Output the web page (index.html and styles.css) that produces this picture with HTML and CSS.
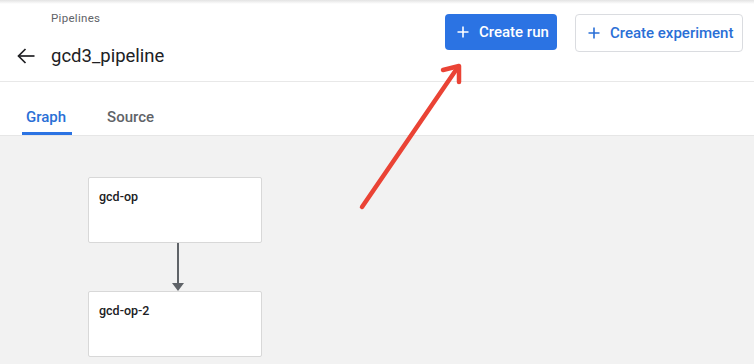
FILE: index.html
```html
<!DOCTYPE html>
<html>
<head>
<meta charset="utf-8">
<link rel="stylesheet" href="styles.css">
</head>
<body>
<div class="page">
  <div class="topshadow"></div>
  <header class="header">
    <div class="titles">
      <div class="crumb">Pipelines</div>
      <div class="title-row">
        <svg class="back" width="18" height="16" viewBox="0 0 18 16"><g stroke="#202124" stroke-width="1.7" fill="none" stroke-linecap="butt"><path d="M1.5 8H17.5"/><path d="M8.5 1L1.5 8L8.5 15"/></g></svg>
        <h1 class="title">gcd3_pipeline</h1>
      </div>
    </div>
    <div class="actions">
      <button class="btn btn-primary"><svg class="plus" width="12" height="12" viewBox="0 0 12 12"><path d="M6 0.5v11M0.5 6h11" stroke="currentColor" stroke-width="1.6"/></svg><span>Create run</span></button>
      <button class="btn btn-outline"><svg class="plus" width="12" height="12" viewBox="0 0 12 12"><path d="M6 0.5v11M0.5 6h11" stroke="currentColor" stroke-width="1.6"/></svg><span>Create experiment</span></button>
    </div>
  </header>
  <nav class="tabs">
    <div class="tab active">Graph</div>
    <div class="tab">Source</div>
  </nav>
  <main class="canvas">
    <div class="node">gcd-op</div>
    <div class="edge">
      <div class="edge-line"></div>
      <div class="edge-head"></div>
    </div>
    <div class="node">gcd-op-2</div>
  </main>
  <svg class="annot" width="754" height="364" viewBox="0 0 754 364">
    <g stroke="#ea4335" stroke-width="4.5" stroke-linecap="round" stroke-linejoin="round" fill="none">
      <path d="M362 207 L458 67"/>
      <path d="M443 70 L459 66 L459 82"/>
    </g>
  </svg>
</div>
</body>
</html>
```

FILE: styles.css
```css
* { box-sizing: border-box; }
html, body { margin: 0; padding: 0; }
body {
  width: 754px;
  height: 364px;
  overflow: hidden;
  background: #ffffff;
  font-family: Roboto, "Liberation Sans", Arial, sans-serif;
  color: #202124;
}
.page {
  position: relative;
  width: 754px;
  height: 364px;
  display: flex;
  flex-direction: column;
}
.topshadow {
  height: 4px;
  background: linear-gradient(#e3e3e3, #ffffff);
  flex: none;
}
.header {
  height: 78px;
  border-bottom: 1px solid #e8e8e8;
  display: flex;
  justify-content: space-between;
  align-items: flex-start;
  padding: 0 11px 0 17px;
  flex: none;
}
.titles {
  display: flex;
  flex-direction: column;
}
.crumb {
  font-size: 11.5px;
  color: #5f6368;
  letter-spacing: 0.3px;
  margin-left: 34px;
  margin-top: 7px;
  line-height: 14px;
}
.title-row {
  display: flex;
  align-items: center;
  margin-top: 20px;
}
.back { margin-right: 16px; flex: none; }
.title {
  margin: 0;
  font-size: 18.5px;
  font-weight: 400;
  line-height: 22px;
  color: #202124;
}
.actions {
  display: flex;
  align-items: flex-start;
  gap: 18px;
  margin-top: 10px;
}
.btn {
  display: flex;
  align-items: center;
  font-family: Roboto, "Liberation Sans", Arial, sans-serif;
  font-size: 15px;
  font-weight: 500;
  border-radius: 4px;
  cursor: pointer;
  letter-spacing: 0;
}
.btn-primary {
  height: 36px;
  width: 112px;
  background: #2b73e3;
  color: #ffffff;
  border: none;
  padding: 0 0 0 12px;
}
.btn-outline {
  height: 38px;
  width: 168px;
  background: #ffffff;
  color: #2a6fd6;
  border: 1px solid #dadce0;
  padding: 0 0 0 12px;
}
.plus { margin-right: 10px; flex: none; }
.tabs {
  height: 54px;
  display: flex;
  align-items: stretch;
  padding-left: 22px;
  gap: 31px;
  border-bottom: 1px solid #e6e6e6;
  flex: none;
}
.tab {
  display: flex;
  align-items: center;
  padding: 0 6px 0 4px;
  font-size: 15px;
  font-weight: 500;
  color: #5f6368;
  padding-top: 20px;
  border-bottom: 3px solid transparent;
}
.tab.active {
  color: #2a6fd6;
  border-bottom-color: #2b73e3;
  border-radius: 3px 3px 0 0;
}
.canvas {
  flex: 1;
  background: #f2f2f2;
  padding: 41px 0 0 88px;
  display: flex;
  flex-direction: column;
}
.node {
  width: 174px;
  height: 66px;
  background: #ffffff;
  border: 1px solid #d8d8d8;
  border-radius: 2px;
  padding: 11px 0 0 10px;
  font-size: 12.5px;
  line-height: 16px;
  font-weight: 500;
  color: #202124;
  flex: none;
}
.edge {
  width: 174px;
  height: 48px;
  display: flex;
  flex-direction: column;
  align-items: center;
  padding-left: 6px;
  flex: none;
}
.edge-line {
  width: 2px;
  height: 40px;
  background: #5f6368;
}
.edge-head {
  width: 0;
  height: 0;
  border-left: 6px solid transparent;
  border-right: 6px solid transparent;
  border-top: 8px solid #5f6368;
}
.annot {
  position: absolute;
  left: 0;
  top: 0;
  pointer-events: none;
}
```
